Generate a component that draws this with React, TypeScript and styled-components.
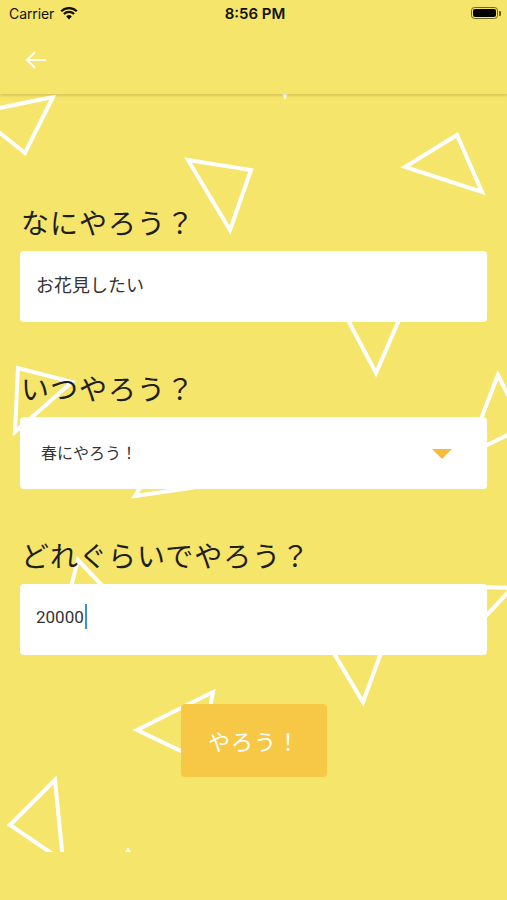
import React from "react";
import styled, { createGlobalStyle } from "styled-components";

const YELLOW = "#F5E56B";

const GlobalStyle = createGlobalStyle`
  html, body { margin: 0; padding: 0; background: ${YELLOW}; }
  * { box-sizing: border-box; }
`;

const Page = styled.div`
  position: relative;
  width: 507px;
  min-height: 900px;
  background: ${YELLOW};
  overflow: hidden;
  font-family: "Noto Sans CJK JP", "Noto Sans", sans-serif;
`;

const Decor = styled.svg`
  position: absolute;
  left: 0;
  top: 0;
  width: 507px;
  height: 852px;
  z-index: 0;
  pointer-events: none;
`;

const AppBar = styled.header`
  position: relative;
  z-index: 2;
  height: 94px;
  background: ${YELLOW};
  box-shadow: 0 1px 3px rgba(120, 100, 20, 0.35);
  display: flex;
  flex-direction: column;
`;

const StatusBar = styled.div`
  height: 27px;
  display: grid;
  grid-template-columns: 1fr auto 1fr;
  align-items: center;
  padding: 0 6px 0 9px;
  color: #111;
`;

const Carrier = styled.div`
  display: flex;
  align-items: center;
  gap: 6px;
  font-family: Inter, "Liberation Sans", sans-serif;
  font-size: 14px;
  letter-spacing: -0.1px;
`;

const Clock = styled.div`
  font-family: Inter, "Liberation Sans", sans-serif;
  font-weight: 600;
  font-size: 15px;
`;

const Battery = styled.div`
  justify-self: end;
  display: flex;
  align-items: center;
  margin-top: -1px;
`;

const BatteryBody = styled.div`
  width: 27px;
  height: 12px;
  border: 1.5px solid #6d6420;
  border-radius: 3.5px;
  padding: 1px;
  display: flex;
`;

const BatteryFill = styled.div`
  flex: 1;
  background: #000;
  border-radius: 2px;
`;

const BatteryNub = styled.div`
  width: 2px;
  height: 5px;
  background: #6d6420;
  border-radius: 0 1px 1px 0;
  margin-left: 1px;
`;

const NavRow = styled.div`
  flex: 1;
  display: flex;
  align-items: center;
  padding-left: 24px;
  padding-bottom: 2px;
`;

const BackButton = styled.button`
  border: 0;
  background: transparent;
  padding: 0;
  width: 24px;
  height: 24px;
  display: flex;
  align-items: center;
  justify-content: center;
`;

const Form = styled.main`
  position: relative;
  z-index: 1;
  display: flex;
  flex-direction: column;
  padding: 108px 20px 0;
`;

const Section = styled.section<{ $gap?: number }>`
  display: flex;
  flex-direction: column;
  margin-bottom: ${(p) => p.$gap ?? 46}px;
`;

const Title = styled.h2`
  margin: 0 0 9px 1px;
  height: 40px;
  line-height: 40px;
  font-size: 28px;
  font-weight: 400;
  color: #1f1f1f;
  letter-spacing: 1px;
`;

const Field = styled.div<{ $h: number; $pad: number }>`
  height: ${(p) => p.$h}px;
  background: #fff;
  border-radius: 4px;
  display: flex;
  align-items: center;
  padding: 0 35px 0 ${(p) => p.$pad}px;
`;

const FieldText = styled.span<{ $size: number; $latin?: boolean; $lift?: number }>`
  flex: 1;
  font-size: ${(p) => p.$size}px;
  color: #333;
  font-family: ${(p) =>
    p.$latin ? 'Roboto, "Noto Sans CJK JP", sans-serif' : '"Noto Sans CJK JP", sans-serif'};
  display: flex;
  align-items: center;
  padding-bottom: ${(p) => p.$lift ?? 0}px;
`;

const Caret = styled.span`
  display: inline-block;
  width: 2px;
  height: 25px;
  background: #3a8ee6;
  margin-left: 1px;
`;

const SelectArrow = styled.span`
  width: 0;
  height: 0;
  border-left: 10px solid transparent;
  border-right: 10px solid transparent;
  border-top: 10px solid #f2bd3c;
  margin-top: 2px;
`;

const Submit = styled.button`
  align-self: center;
  margin-left: 1px;
  width: 146px;
  height: 73px;
  border: 0;
  border-radius: 4px;
  background: #f7c845;
  color: #fff;
  font-family: "Noto Sans CJK JP", sans-serif;
  font-size: 22px;
  letter-spacing: 1px;
  padding: 0 0 2px;
`;

const triangles: number[][] = [
  [-25, 113, 53, 97, 25, 153],
  [188, 160, 251, 170, 230, 230],
  [405, 167, 457, 135, 482, 192],
  [332, 290, 412, 290, 376, 373],
  [498, 375, 524, 427, 467, 455],
  [15, 432, 18, 368, 72, 382],
  [135, 496, 260, 478, 170, 440],
  [78, 560, 57, 640, 154, 640],
  [314, 620, 393, 620, 363, 702],
  [512, 588, 440, 586, 460, 644],
  [137, 730, 213, 692, 200, 760],
  [10, 825, 55, 780, 63, 861],
  [270, 60, 300, 60, 285, 95],
  [128, 851, 100, 900, 160, 900],
];

function Wifi() {
  return (
    <svg width="18" height="13" viewBox="0 0 18 13">
      <path d="M9 12.5 L6.2 9.4 A4 4 0 0 1 11.8 9.4 Z" fill="#111" />
      <path d="M3.9 7 A7.4 7.4 0 0 1 14.1 7" stroke="#111" strokeWidth="2.2" fill="none" />
      <path d="M1.2 4.2 A11.2 11.2 0 0 1 16.8 4.2" stroke="#111" strokeWidth="2.2" fill="none" />
    </svg>
  );
}

function BackArrow() {
  return (
    <svg width="22" height="20" viewBox="0 0 22 20">
      <path
        d="M21 10 H2 M10 2 L2 10 L10 18"
        stroke="#fff"
        strokeWidth="2"
        fill="none"
        strokeLinecap="butt"
        strokeLinejoin="miter"
      />
    </svg>
  );
}

export default function App() {
  return (
    <Page>
      <GlobalStyle />
      <Decor viewBox="0 0 507 852">
        {triangles.map((t, i) => (
          <polygon
            key={i}
            points={`${t[0]},${t[1]} ${t[2]},${t[3]} ${t[4]},${t[5]}`}
            fill="none"
            stroke="#fff"
            strokeWidth="4"
            strokeLinejoin="miter"
          />
        ))}
      </Decor>
      <AppBar>
        <StatusBar>
          <Carrier>
            Carrier
            <Wifi />
          </Carrier>
          <Clock>8:56 PM</Clock>
          <Battery>
            <BatteryBody>
              <BatteryFill />
            </BatteryBody>
            <BatteryNub />
          </Battery>
        </StatusBar>
        <NavRow>
          <BackButton aria-label="戻る">
            <BackArrow />
          </BackButton>
        </NavRow>
      </AppBar>
      <Form>
        <Section>
          <Title>なにやろう？</Title>
          <Field $h={71} $pad={16}>
            <FieldText $size={18} $lift={5}>お花見したい</FieldText>
          </Field>
        </Section>
        <Section>
          <Title>いつやろう？</Title>
          <Field $h={72} $pad={21}>
            <FieldText $size={16} $lift={2}>春にやろう！</FieldText>
            <SelectArrow />
          </Field>
        </Section>
        <Section $gap={49}>
          <Title>どれぐらいでやろう？</Title>
          <Field $h={71} $pad={16}>
            <FieldText $size={17} $latin $lift={6}>
              20000
              <Caret />
            </FieldText>
          </Field>
        </Section>
        <Submit>やろう！</Submit>
      </Form>
    </Page>
  );
}
